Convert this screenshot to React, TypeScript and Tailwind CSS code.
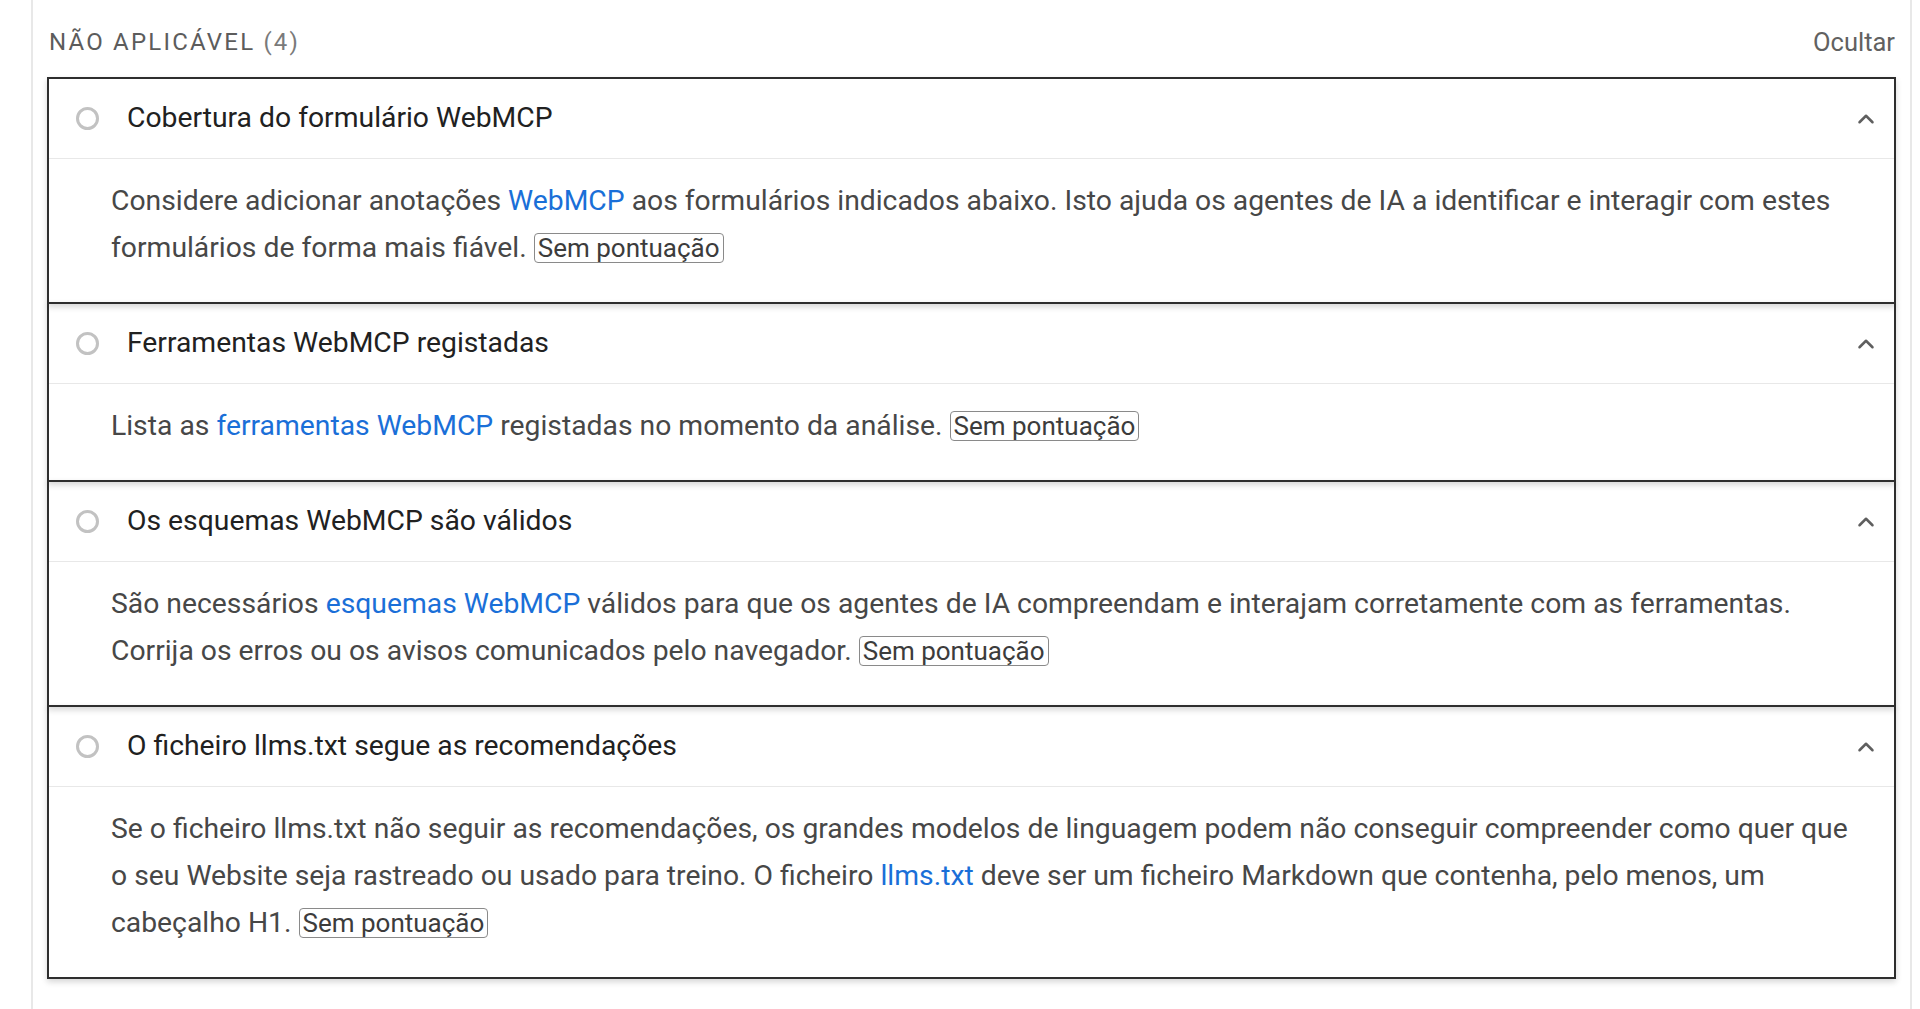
import React from "react";
import { ChevronUp } from "lucide-react";

type Audit = {
  title: string;
  body: React.ReactNode;
};

const Link = ({ children }: { children: React.ReactNode }) => (
  <a href="#" className="text-[#1a6fd8] no-underline">
    {children}
  </a>
);

const Badge = () => (
  <span className="inline-block border border-[#8a8a8a] rounded-[4px] px-[3px] text-[26px] leading-[28px] text-[#3c3c3c] align-baseline">
    Sem pontuação
  </span>
);

const audits: Audit[] = [
  {
    title: "Cobertura do formulário WebMCP",
    body: (
      <>
        Considere adicionar anotações <Link>WebMCP</Link> aos formulários indicados abaixo. Isto ajuda os agentes de IA a
        identificar e interagir com estes formulários de forma mais fiável. <Badge />
      </>
    ),
  },
  {
    title: "Ferramentas WebMCP registadas",
    body: (
      <>
        Lista as <Link>ferramentas WebMCP</Link> registadas no momento da análise. <Badge />
      </>
    ),
  },
  {
    title: "Os esquemas WebMCP são válidos",
    body: (
      <>
        São necessários <Link>esquemas WebMCP</Link> válidos para que os agentes de IA compreendam e interajam corretamente
        com as ferramentas. Corrija os erros ou os avisos comunicados pelo navegador. <Badge />
      </>
    ),
  },
  {
    title: "O ficheiro llms.txt segue as recomendações",
    body: (
      <>
        Se o ficheiro llms.txt não seguir as recomendações, os grandes modelos de linguagem podem não conseguir compreender
        como quer que o seu Website seja rastreado ou usado para treino. O ficheiro <Link>llms.txt</Link> deve ser um
        ficheiro Markdown que contenha, pelo menos, um cabeçalho H1. <Badge />
      </>
    ),
  },
];

function AuditItem({ audit, first }: { audit: Audit; first: boolean }) {
  return (
    <div
      className={`border-2 border-[#2e2e2e] shadow-[0_3px_6px_rgba(0,0,0,0.16)] ${first ? "" : "-mt-[2px]"}`}
    >
      <div className="h-[80px] flex items-center pl-[27px] pr-[15px] border-b border-[#e8e8e8]">
        <span className="w-[23px] h-[23px] rounded-full border-[3px] border-[#c2c2c2] shrink-0" />
        <span className="ml-[28px] text-[28.3px] text-[#212121] flex-1">{audit.title}</span>
        <ChevronUp size={26} strokeWidth={2.3} className="text-[#5f5f5f]" />
      </div>
      <div className="pl-[62px] pr-[27px] pt-[18px] pb-[31px] text-[28.3px] leading-[47px] text-[#474747]">
        {audit.body}
      </div>
    </div>
  );
}

export default function App() {
  return (
    <div className="h-screen overflow-hidden bg-white font-['Roboto','Liberation_Sans',sans-serif]">
      <div className="ml-[31px] w-[1881px] h-full border-x-2 border-[#e8e8e8] px-[14px] pt-[27px]">
        <div className="flex items-center justify-between mb-[20px] h-[30px]">
          <h2 className="text-[24px] tracking-[2.2px] text-[#5c5c5c] pl-[2px]">
            NÃO APLICÁVEL <span className="text-[#7a7a7a]">(4)</span>
          </h2>
          <button className="text-[25.5px] text-[#616161] pr-[1px]">Ocultar</button>
        </div>
        <div>
          {audits.map((a, i) => (
            <AuditItem key={a.title} audit={a} first={i === 0} />
          ))}
        </div>
      </div>
    </div>
  );
}
